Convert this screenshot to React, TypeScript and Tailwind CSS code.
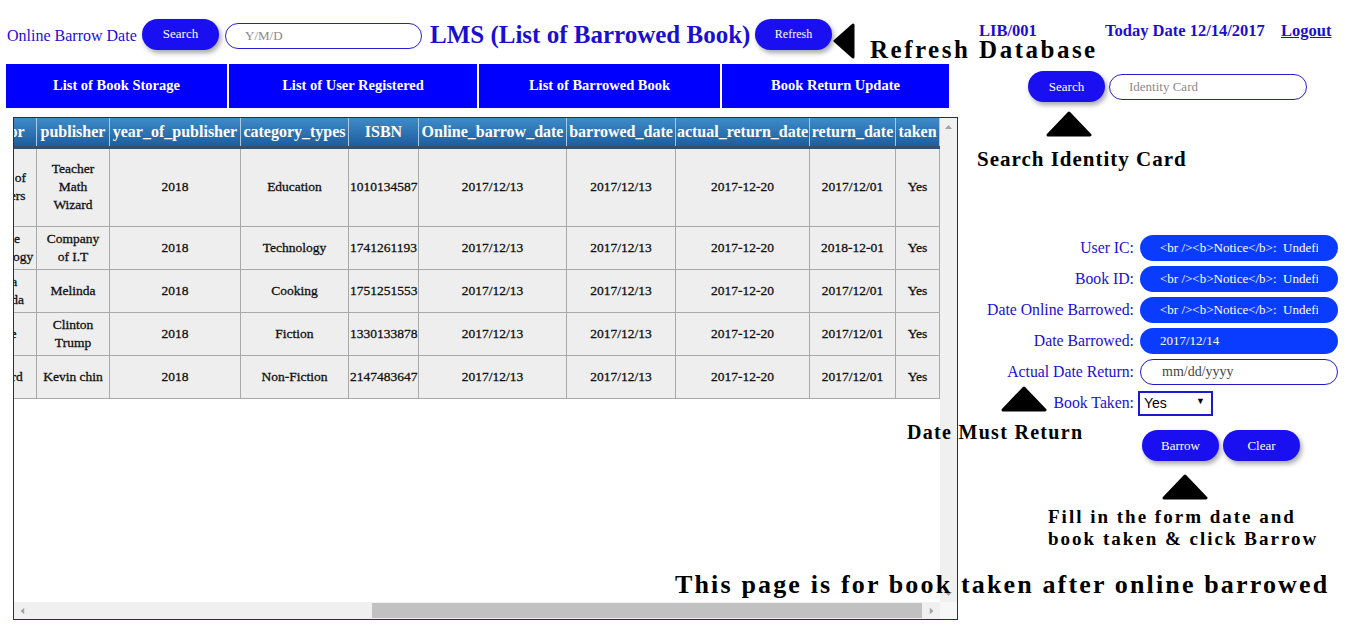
import { useLayoutEffect, useRef } from 'react';

// ── Data ───────────────────────────────────────────────────────────────────────

const columns = [
  { label: 'id', w: 'w-[40px]' },
  { label: 'online_id', w: 'w-[90px]' },
  { label: 'user_ic', w: 'w-[110px]' },
  { label: 'book_id', w: 'w-[80px]' },
  { label: 'book_title', w: 'w-[266px]' },
  { label: 'author', w: 'w-[70px]' },
  { label: 'publisher', w: 'w-[73px]' },
  { label: 'year_of_publisher', w: 'w-[131px]' },
  { label: 'category_types', w: 'w-[108px]' },
  { label: 'ISBN', w: 'w-[70px]' },
  { label: 'Online_barrow_date', w: 'w-[148px]' },
  { label: 'barrowed_date', w: 'w-[109px]' },
  { label: 'actual_return_date', w: 'w-[134px]' },
  { label: 'return_date', w: 'w-[86px]' },
  { label: 'taken', w: 'w-[44px]' },
];

const rows = [
  ['1', 'OB0001', '950101-10-5521', 'B0001', 'Mathematics for Young Learners', 'Group of Teachers', 'Teacher Math Wizard', '2018', 'Education', '1010134587', '2017/12/13', '2017/12/13', '2017-12-20', '2017/12/01', 'Yes'],
  ['2', 'OB0002', '950101-10-5521', 'B0002', 'Basic Computer Networking', 'Online Technology', 'Company of\u00a0I.T', '2018', 'Technology', '1741261193', '2017/12/13', '2017/12/13', '2017-12-20', '2018-12-01', 'Yes'],
  ['3', 'OB0003', '950101-10-5521', 'B0003', 'Home Cooking Made Easy', 'Linda Melinda', 'Melinda', '2018', 'Cooking', '1751251553', '2017/12/13', '2017/12/13', '2017-12-20', '2017/12/01', 'Yes'],
  ['4', 'OB0004', '950101-10-5521', 'B0004', 'The Long Road Home', 'Steve', 'Clinton Trump', '2018', 'Fiction', '1330133878', '2017/12/13', '2017/12/13', '2017-12-20', '2017/12/01', 'Yes'],
  ['5', 'OB0005', '950101-10-5521', 'B0005', 'A Brief History of Books', 'Richard', 'Kevin chin', '2018', 'Non-Fiction', '2147483647', '2017/12/13', '2017/12/13', '2017-12-20', '2017/12/01', 'Yes'],
];

// ── Small pieces ───────────────────────────────────────────────────────────────

function PillButton({ label, small }: { label: string; small?: boolean }) {
  return (
    <button
      className={`h-[31px] w-[77px] shrink-0 rounded-full bg-[#1a0ff0] text-white shadow-[2px_3px_5px_rgba(0,0,0,0.35)] ${small ? 'text-[12px]' : 'text-[13px]'}`}
    >
      {label}
    </button>
  );
}

function Triangle({ className, dir }: { className: string; dir: 'up' | 'left' }) {
  if (dir === 'left') {
    return (
      <svg className={`absolute ${className}`} viewBox="0 0 22 36">
        <polygon points="2,18 20,2 20,34" fill="#000" stroke="#000" strokeWidth="3" strokeLinejoin="round" />
      </svg>
    );
  }
  return (
    <svg className={`absolute ${className}`} viewBox="0 0 46 26">
      <polygon points="23,2 44,24 2,24" fill="#000" stroke="#000" strokeWidth="3" strokeLinejoin="round" />
    </svg>
  );
}

// little grey arrow used on the scrollbar buttons
function ScrollArrow({ rotate }: { rotate: string }) {
  return (
    <div className="flex h-[17px] w-[17px] shrink-0 items-center justify-center">
      <svg className={`h-[4px] w-[7px] ${rotate}`} viewBox="0 0 7 4">
        <polygon points="3.5,0 7,4 0,4" fill="#a3a3a3" />
      </svg>
    </div>
  );
}

function BlueField({ value }: { value: string }) {
  return (
    <input
      readOnly
      value={value}
      className="h-[26px] w-[198px] rounded-full bg-[#0a3cff] px-[20px] text-[13px] text-white outline-none"
    />
  );
}

// ── Page ───────────────────────────────────────────────────────────────────────

export default function App() {
  const scroller = useRef<HTMLDivElement>(null);

  useLayoutEffect(() => {
    if (scroller.current) scroller.current.scrollLeft = scroller.current.scrollWidth;
  }, []);

  const notice = '<br /><b>Notice</b>:  Undefined variable';

  return (
    <div className="relative flex h-[628px] w-[1349px] overflow-hidden bg-white font-['Liberation_Serif',serif] text-[#1a0fd0]">
      {/* Left side */}
      <div className="w-[958px] shrink-0 pl-[6px]">
        <div className="mt-[18px] flex h-[32px] items-center">
          <span className="ml-[1px] mt-[3px] w-[135px] shrink-0 text-[16px]">Online Barrow Date</span>
          <PillButton label="Search" />
          <input
            placeholder="Y/M/D"
            className="mb-[1px] ml-[6px] h-[26px] w-[197px] self-end rounded-full border-[1.5px] border-[#2a1fd0] bg-white px-[19px] text-[13px] text-black outline-none placeholder:text-[#8a8a8a]"
          />
          <span className="ml-[8px] w-[325px] shrink-0 text-[25px] font-bold leading-none">LMS (List of Barrowed Book)</span>
          <PillButton label="Refresh" small />
        </div>

        <nav className="mt-[14px] flex h-[44px] gap-[2px] text-[14.5px] font-bold text-white">
          <div className="flex w-[221px] items-center justify-center bg-[#0000ff]">List of Book Storage</div>
          <div className="flex w-[248px] items-center justify-center bg-[#0000ff]">List of User Registered</div>
          <div className="flex w-[241px] items-center justify-center bg-[#0000ff]">List of Barrowed Book</div>
          <div className="flex w-[227px] items-center justify-center bg-[#0000ff]">Book Return Update</div>
        </nav>

        <div className="ml-[7px] mt-[9px] grid h-[503px] w-[945px] grid-cols-[926px_17px] grid-rows-[484px_17px] border border-[#2020b0]">
          <div ref={scroller} className="overflow-hidden">
            <table className="w-[1559px] table-fixed border-collapse text-center">
              <colgroup>
                {columns.map((c) => (
                  <col key={c.label} className={c.w} />
                ))}
              </colgroup>
              <thead>
                <tr className="h-[29px] bg-gradient-to-b from-[#3f8bc9] to-[#1c5c9c]">
                  {columns.map((c) => (
                    <th
                      key={c.label}
                      className="overflow-hidden whitespace-nowrap border-x border-b-[3px] border-x-[#a8cbe8] border-b-[#34506e] px-0 text-[16px] font-bold leading-[20px] text-white"
                    >
                      {c.label}
                    </th>
                  ))}
                </tr>
              </thead>
              <tbody>
                {rows.map((r, i) => (
                  <tr key={r[0]} className={i === 0 ? 'h-[79px]' : 'h-[43px]'}>
                    {r.map((cell, j) => (
                      <td
                        key={j}
                        className="border border-[#a9a9a9] bg-[#eeeeee] px-[1px] text-[13.5px] leading-[18px] text-[#111] [-webkit-text-stroke:0.3px_#111]"
                      >
                        {cell}
                      </td>
                    ))}
                  </tr>
                ))}
              </tbody>
            </table>
          </div>

          {/* vertical scrollbar (nothing to scroll) */}
          <div className="flex flex-col justify-between bg-[#f0f0f0]">
            <ScrollArrow rotate="" />
            <ScrollArrow rotate="rotate-180" />
          </div>

          {/* horizontal scrollbar, scrolled to the far right */}
          <div className="flex bg-[#f0f0f0]">
            <ScrollArrow rotate="-rotate-90" />
            <div className="flex-1 py-[1px]">
              <div className="ml-[341px] h-full w-[550px] bg-[#c1c1c1]" />
            </div>
            <ScrollArrow rotate="rotate-90" />
          </div>
          <div className="bg-[#f7f7f7]" />
        </div>
      </div>

      {/* Right side */}
      <div className="flex-1">
        <div className="mt-[22px] flex h-[19px] items-center text-[16.5px] font-bold">
          <span className="ml-[21px] w-[126px] shrink-0">LIB/001</span>
          <span className="w-[176px] shrink-0">Today Date 12/14/2017</span>
          <span className="underline">Logout</span>
        </div>

        <div className="ml-[70px] mt-[30px] flex h-[31px] items-center gap-[4px]">
          <PillButton label="Search" />
          <input
            placeholder="Identity Card"
            className="h-[26px] w-[198px] rounded-full border-[1.5px] border-[#2a1fd0] bg-white px-[19px] text-[13px] text-black outline-none placeholder:text-[#8a8a8a]"
          />
        </div>

        <div className="mt-[133px] grid grid-cols-[176px_198px] items-center gap-x-[6px] gap-y-[5px] text-[15.75px]">
          <label className="text-right leading-[26px]">User IC:</label>
          <BlueField value={notice} />
          <label className="text-right leading-[26px]">Book ID:</label>
          <BlueField value={notice} />
          <label className="text-right leading-[26px]">Date Online Barrowed:</label>
          <BlueField value={notice} />
          <label className="text-right leading-[26px]">Date Barrowed:</label>
          <BlueField value="2017/12/14" />
          <label className="text-right leading-[26px]">Actual Date Return:</label>
          <input
            placeholder="mm/dd/yyyy"
            className="h-[26px] w-[198px] rounded-full border-[1.5px] border-[#2418c8] bg-white px-[21px] text-[14px] text-black outline-none placeholder:text-[#444]"
          />
          <label className="text-right leading-[26px]">Book Taken:</label>
          <div className="relative -ml-[2px] h-[25px] w-[75px]">
            <select className="h-full w-full appearance-none border-2 border-[#1a1ad0] bg-white pl-[4px] font-['Liberation_Sans',sans-serif] text-[14px] text-black outline-none">
              <option>Yes</option>
              <option>No</option>
            </select>
            <span className="pointer-events-none absolute right-[8px] top-[6px] text-[9px] leading-none text-black">▼</span>
          </div>
        </div>

        <div className="ml-[184px] mt-[14px] flex gap-[4px]">
          <PillButton label="Barrow" />
          <PillButton label="Clear" />
        </div>
      </div>

      {/* Screenshot annotations */}
      <Triangle dir="left" className="left-[833px] top-[23px] h-[36px] w-[22px]" />
      <div className="absolute left-[870px] top-[35px] text-[25px] font-bold leading-[30px] tracking-[2.5px] text-black">Refresh Database</div>
      <Triangle dir="up" className="left-[1046px] top-[111px] h-[26px] w-[46px]" />
      <div className="absolute left-[977px] top-[146px] text-[21px] font-bold leading-[26px] tracking-[1px] text-black">Search Identity Card</div>
      <Triangle dir="up" className="left-[1001px] top-[386px] h-[26px] w-[46px]" />
      <div className="absolute left-[907px] top-[420px] text-[20px] font-bold leading-[24px] tracking-[1.3px] text-black">Date Must Return</div>
      <Triangle dir="up" className="left-[1162px] top-[474px] h-[26px] w-[46px]" />
      <div className="absolute left-[1048px] top-[506px] text-[19px] font-bold leading-[22px] tracking-[2px] text-black">
        Fill in the form date and
        <br />
        book taken &amp; click Barrow
      </div>
      <div className="absolute left-[675px] top-[569px] text-[26px] font-bold leading-[32px] tracking-[2.15px] text-black">This page is for book taken after online barrowed</div>
    </div>
  );
}
